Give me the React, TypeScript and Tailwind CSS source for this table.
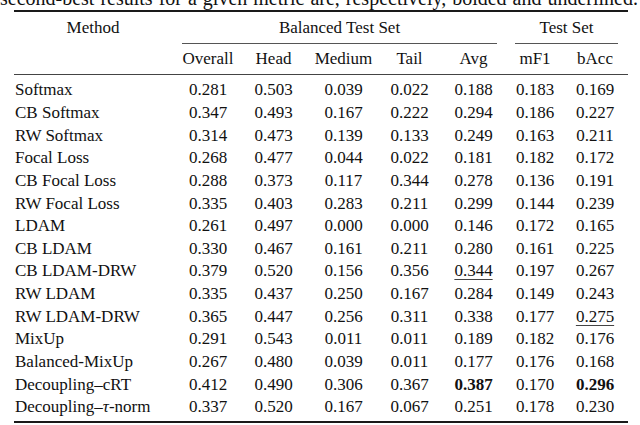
import React from "react";

type Row = { label: React.ReactNode; vals: string[]; bold?: number[]; under?: number[] };

const rows: Row[] = [
  { label: "Softmax", vals: ["0.281", "0.503", "0.039", "0.022", "0.188", "0.183", "0.169"] },
  { label: "CB Softmax", vals: ["0.347", "0.493", "0.167", "0.222", "0.294", "0.186", "0.227"] },
  { label: "RW Softmax", vals: ["0.314", "0.473", "0.139", "0.133", "0.249", "0.163", "0.211"] },
  { label: "Focal Loss", vals: ["0.268", "0.477", "0.044", "0.022", "0.181", "0.182", "0.172"] },
  { label: "CB Focal Loss", vals: ["0.288", "0.373", "0.117", "0.344", "0.278", "0.136", "0.191"] },
  { label: "RW Focal Loss", vals: ["0.335", "0.403", "0.283", "0.211", "0.299", "0.144", "0.239"] },
  { label: "LDAM", vals: ["0.261", "0.497", "0.000", "0.000", "0.146", "0.172", "0.165"] },
  { label: "CB LDAM", vals: ["0.330", "0.467", "0.161", "0.211", "0.280", "0.161", "0.225"] },
  { label: "CB LDAM-DRW", vals: ["0.379", "0.520", "0.156", "0.356", "0.344", "0.197", "0.267"], under: [4] },
  { label: "RW LDAM", vals: ["0.335", "0.437", "0.250", "0.167", "0.284", "0.149", "0.243"] },
  { label: "RW LDAM-DRW", vals: ["0.365", "0.447", "0.256", "0.311", "0.338", "0.177", "0.275"], under: [6] },
  { label: "MixUp", vals: ["0.291", "0.543", "0.011", "0.011", "0.189", "0.182", "0.176"] },
  { label: "Balanced-MixUp", vals: ["0.267", "0.480", "0.039", "0.011", "0.177", "0.176", "0.168"] },
  { label: "Decoupling\u2013cRT", vals: ["0.412", "0.490", "0.306", "0.367", "0.387", "0.170", "0.296"], bold: [4, 6] },
  {
    label: (
      <>
        Decoupling{"\u2013"}
        <i>τ</i>-norm
      </>
    ),
    vals: ["0.337", "0.520", "0.167", "0.067", "0.251", "0.178", "0.230"],
  },
];

const cols = "grid grid-cols-[162px_64px_67px_73px_59px_69px_54px_66px]";
const heads = ["Overall", "Head", "Medium", "Tail", "Avg", "mF1", "bAcc"];

export default function App() {
  return (
    <div className="font-serif">
      <div className="w-[640px] h-[425px] overflow-hidden bg-white text-[#111] font-[Liberation_Serif] text-[17px]">
        <div className="h-[10px] overflow-hidden">
          <div className="mt-[-12px] text-[20px] leading-[20px] w-[638px] text-justify [text-align-last:justify]">
            second-best results for a given metric are, respectively, bolded and underlined.
          </div>
        </div>
        <div className="pl-[14px] pr-[12px]">
          <div className="h-[2px] bg-[#1a1a1a]" />
          <div className={`${cols} mt-[4.6px]`}>
            <div className="h-[22.65px] leading-[22.65px] text-center pr-[4px]">Method</div>
            <div className="col-span-5 ml-[6px] mr-[11px]">
              <div className="h-[22.65px] leading-[22.65px] text-center">Balanced Test Set</div>
              <div className="mt-[3.3px] h-[1px] bg-[#555]" />
            </div>
            <div className="col-span-2 ml-[7px] mr-[10px]">
              <div className="h-[22.65px] leading-[22.65px] text-center">Test Set</div>
              <div className="mt-[3.3px] h-[1px] bg-[#555]" />
            </div>
          </div>
          <div className={`${cols} mt-[4.9px]`}>
            <div className="h-[22.65px]" />
            {heads.map((h) => (
              <div key={h} className="h-[22.65px] leading-[22.65px] text-center">
                {h}
              </div>
            ))}
          </div>
          <div className="mt-[2.9px] h-[1.5px] bg-[#444]" />
          <div className="mt-[3.9px]">
            {rows.map((r, i) => (
              <div key={i} className={`${cols} h-[22.65px] leading-[22.65px]`}>
                <div className="pl-[1px] whitespace-nowrap">{r.label}</div>
                {r.vals.map((v, j) => {
                  const b = r.bold?.includes(j);
                  const u = r.under?.includes(j);
                  return (
                    <div key={j} className="text-center">
                      <span
                        className={
                          b
                            ? "font-bold"
                            : u
                            ? "underline decoration-[1px] underline-offset-[3px] decoration-[#444]"
                            : ""
                        }
                      >
                        {v}
                      </span>
                    </div>
                  );
                })}
              </div>
            ))}
          </div>
          <div className="mt-[2.3px] h-[2px] bg-[#1a1a1a]" />
        </div>
      </div>
    </div>
  );
}
